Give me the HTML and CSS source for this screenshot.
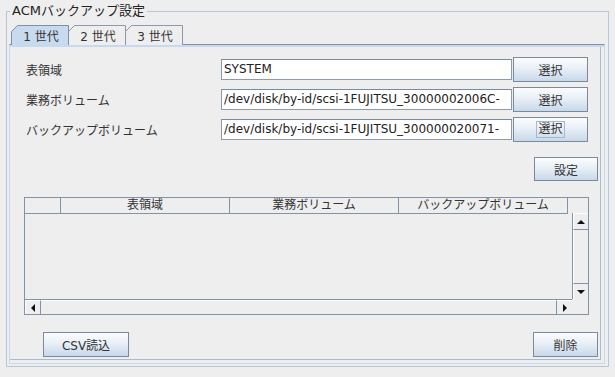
FILE: index.html
```html
<!DOCTYPE html>
<html lang="ja">
<head>
  <meta charset="UTF-8" />
  <title>ACMバックアップ設定</title>
  <link rel="stylesheet" href="styles.css">
</head>
<body>
  <div class="group">
    <div class="group-title">ACMバックアップ設定</div>

    <!-- Generation tabs -->
    <div class="tabs">
      <div class="tab selected">
        <svg class="tab-shape" width="58" height="20" viewBox="0 0 58 20"><path d="M0.5 20 V6.5 L6.5 0.5 H57.5 V20" /></svg>
        <span>1 世代</span>
      </div>
      <div class="tab">
        <svg class="tab-shape" width="58" height="20" viewBox="0 0 58 20"><path d="M0.5 20 V6.5 L6.5 0.5 H57.5 V20" /></svg>
        <span>2 世代</span>
      </div>
      <div class="tab">
        <svg class="tab-shape" width="58" height="20" viewBox="0 0 58 20"><path d="M0.5 20 V6.5 L6.5 0.5 H57.5 V20" /></svg>
        <span>3 世代</span>
      </div>
    </div>

    <div class="panel">
      <div class="form-rows">
        <div class="form-row">
          <div class="label">表領域</div>
          <div class="field">SYSTEM</div>
          <button class="btn select-btn">選択</button>
        </div>
        <div class="form-row">
          <div class="label">業務ボリューム</div>
          <div class="field">/dev/disk/by-id/scsi-1FUJITSU_30000002006C-</div>
          <button class="btn select-btn">選択</button>
        </div>
        <div class="form-row">
          <div class="label">バックアップボリューム</div>
          <div class="field">/dev/disk/by-id/scsi-1FUJITSU_300000020071-</div>
          <button class="btn select-btn"><span class="focus">選択</span></button>
        </div>
      </div>

      <div class="set-row">
        <button class="btn set-btn">設定</button>
      </div>

      <!-- Volume table -->
      <div class="table-box">
        <div class="thead">
          <div class="th num"></div>
          <div class="th">表領域</div>
          <div class="th">業務ボリューム</div>
          <div class="th">バックアップボリューム</div>
        </div>
        <div class="head-gap"></div>
        <div class="tbody"></div>
        <div class="vscroll">
          <div class="arrow-btn up"><i class="tri tri-up"></i></div>
          <div class="track"></div>
          <div class="arrow-btn down"><i class="tri tri-down"></i></div>
        </div>
        <div class="hscroll">
          <div class="arrow-btn left"><i class="tri tri-left"></i></div>
          <div class="track"></div>
          <div class="arrow-btn right"><i class="tri tri-right"></i></div>
        </div>
        <div class="corner"></div>
      </div>

      <div class="bottom-row">
        <button class="btn csv-btn">CSV読込</button>
        <button class="btn del-btn">削除</button>
      </div>
    </div>
  </div>
</body>
</html>
```

FILE: styles.css
```css
* {
  box-sizing: border-box;
}

body {
  margin: 0;
  background: #eeeeee;
  color: #333;
  font-family: "DejaVu Sans", "Noto Sans CJK JP", sans-serif;
  font-size: 12px;
}

.group {
  position: relative;
  margin: 11px 0 0 6px;
  width: 603px;
  height: 356px;
  border: 1px solid #b7c7d8;
  padding: 13px 3px 0 2px;
}

.group-title {
  position: absolute;
  left: 3px;
  top: -9px;
  padding: 0 2px;
  background: #eeeeee;
  font-size: 13px;
  line-height: 15px;
  color: #222;
}

/* tabs */
.tabs {
  display: flex;
  height: 19px;
  margin-left: 2px;
  position: relative;
  z-index: 1;
}

.tab {
  position: relative;
  width: 58px;
  height: 20px;
  display: flex;
  align-items: center;
  justify-content: center;
}

.tab + .tab {
  margin-left: -1px;
}

.tab-shape {
  position: absolute;
  left: 0;
  top: 0;
}

.tab-shape path {
  fill: #eeeeee;
  stroke: #8c99aa;
  stroke-width: 1;
}

.tab.selected {
  z-index: 2;
}

.tab.selected .tab-shape path {
  fill: #c8daee;
  stroke: #7d90a8;
}

.tab span {
  position: relative;
  padding: 1px 0 0 2px;
  color: #333;
}

/* content panel */
.panel {
  height: 320px;
  border: 1px solid #c6d9ee;
  border-top-color: #7d90a8;
  box-shadow: inset 0 2px 0 #c6d9ee, inset -3px -3px 0 #eeeeee, inset -4px -4px 0 #a9bbd0;
  padding: 12px 6px 0 0;
}

.form-rows {
  display: flex;
  flex-direction: column;
  gap: 5px;
  padding-left: 16px;
}

.form-row {
  display: flex;
  align-items: center;
  height: 25px;
}

.label {
  width: 195px;
  color: #333;
}

.field {
  width: 291px;
  height: 21px;
  border: 1px solid #8c9aab;
  border-top-color: #7a899b;
  background: white;
  padding: 0 2px;
  line-height: 19px;
  overflow: hidden;
  white-space: nowrap;
  color: #222;
}

.btn {
  font: inherit;
  color: #333;
  border: 1px solid #7a8a9c;
  background: linear-gradient(to bottom, #fbfcfe 0%, #ebf1f8 40%, #c8d8ea 100%);
  padding: 0;
  display: flex;
  align-items: center;
  justify-content: center;
}

.select-btn {
  width: 75px;
  height: 25px;
  margin-left: 1px;
}

.focus {
  border: 1px solid #a6b8cc;
  padding: 0 1px;
  line-height: 15px;
}

.set-row {
  display: flex;
  justify-content: flex-end;
  margin-top: 15px;
}

.set-btn {
  width: 64px;
  height: 24px;
}

/* table */
.table-box {
  margin: 16px 0 0 14px;
  width: 565px;
  height: 118px;
  border: 1px solid #8093a9;
  display: grid;
  grid-template-columns: 547px 16px;
  grid-template-rows: 16px 85px 15px;
}

.thead {
  display: flex;
}

.th {
  width: 169px;
  height: 16px;
  border-right: 1px solid #8093a9;
  border-bottom: 1px solid #8093a9;
  text-align: center;
  line-height: 15px;
  color: #333;
}

.th.num {
  width: 36px;
}

.vscroll {
  display: flex;
  flex-direction: column;
  border-left: 1px solid #8093a9;
  margin-top: -1px;
}

.vscroll .track {
  flex: 1;
  border-left: 1px solid #ffffff;
}

.hscroll {
  display: flex;
  border-top: 1px solid #8093a9;
}

.hscroll .track {
  flex: 1;
  border-top: 1px solid #ffffff;
}

.arrow-btn {
  display: flex;
  align-items: center;
  justify-content: center;
  background: #eeeeee;
  border-top: 1px solid #ffffff;
  border-left: 1px solid #ffffff;
}

.arrow-btn.up {
  height: 17px;
  border-bottom: 1px solid #8093a9;
}

.arrow-btn.down {
  height: 16px;
  border-top: 1px solid #8093a9;
}

.arrow-btn.left {
  width: 16px;
  border-right: 1px solid #8093a9;
}

.arrow-btn.right {
  width: 16px;
  border-left: 1px solid #8093a9;
}

.tri {
  width: 0;
  height: 0;
}

.tri-up {
  border-left: 4px solid transparent;
  border-right: 4px solid transparent;
  border-bottom: 4px solid #111;
}

.tri-down {
  border-left: 4px solid transparent;
  border-right: 4px solid transparent;
  border-top: 4px solid #111;
}

.tri-left {
  border-top: 4px solid transparent;
  border-bottom: 4px solid transparent;
  border-right: 4px solid #111;
}

.tri-right {
  border-top: 4px solid transparent;
  border-bottom: 4px solid transparent;
  border-left: 4px solid #111;
}

.bottom-row {
  display: flex;
  justify-content: space-between;
  margin-top: 17px;
  padding-left: 33px;
}

.csv-btn {
  width: 86px;
  height: 25px;
}

.del-btn {
  width: 65px;
  height: 25px;
}
```
